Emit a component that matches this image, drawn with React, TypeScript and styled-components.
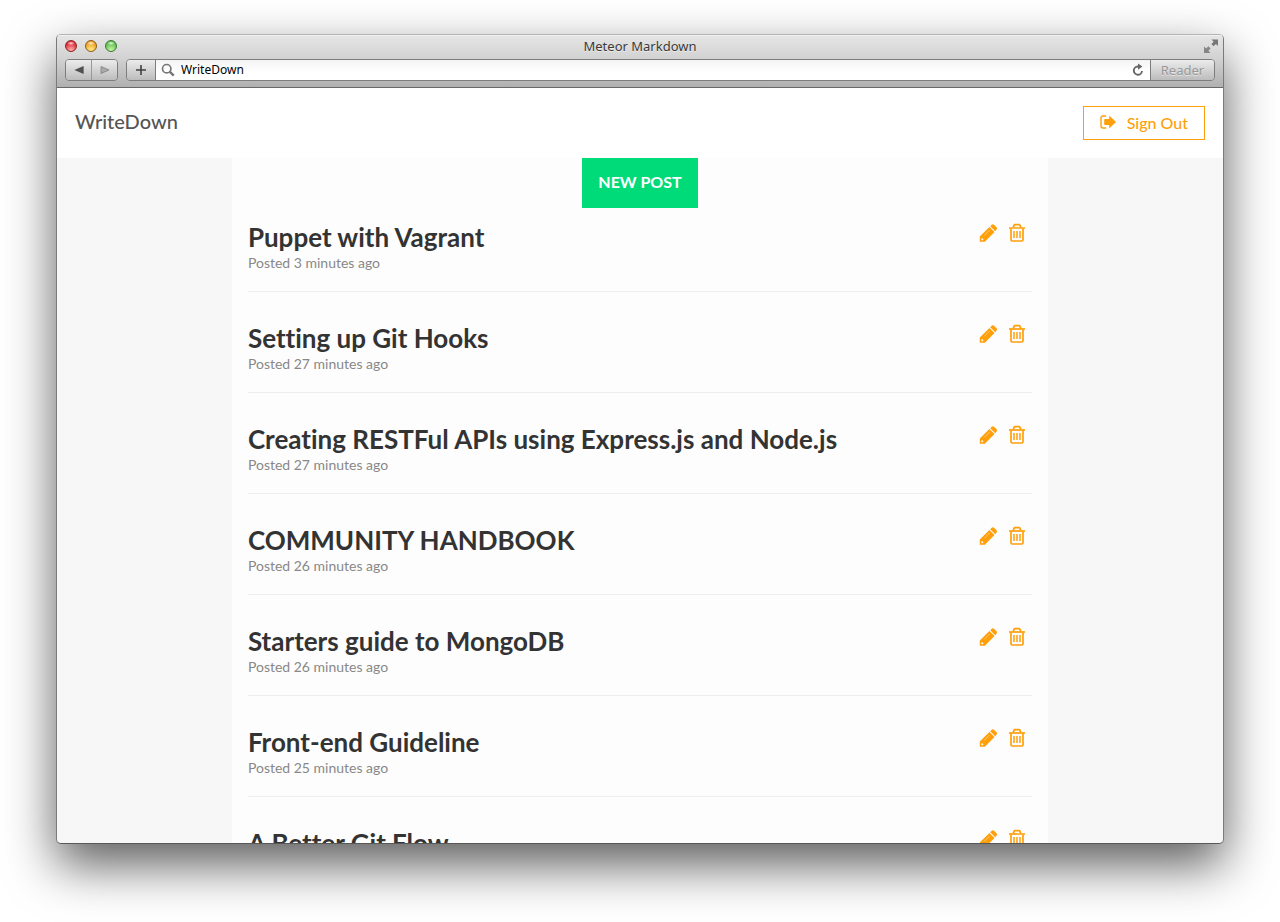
import React from "react";
import styled, { createGlobalStyle } from "styled-components";

const GlobalStyle = createGlobalStyle`
  *, *::before, *::after { box-sizing: border-box; }
  body {
    margin: 0;
    background: #fff;
    font-family: Lato, "Liberation Sans", sans-serif;
    font-variant-ligatures: none;
    color: #333;
  }
  button, input { font: inherit; }
`;

const ORANGE = "#ff9f0a";

const Desktop = styled.div`
  display: flex;
  height: 100vh;
  padding: 34px 56px 78px;
`;

const BrowserWindow = styled.div`
  flex: 1;
  min-width: 0;
  display: flex;
  flex-direction: column;
  overflow: hidden;
  border: 1px solid #7a7a7a;
  border-top-color: #b4b4b4;
  border-bottom-color: #585858;
  border-radius: 5px;
  background: #f7f7f7;
  box-shadow: 0 21px 50px rgba(0, 0, 0, 0.64);
`;

const Chrome = styled.div`
  flex: none;
  padding: 0 8px 6px;
  border-bottom: 1px solid #686868;
  background: linear-gradient(#e6e6e6, #d2d2d2 45%, #b0b0b0);
  font-family: "Noto Sans", "Open Sans", sans-serif;
  box-shadow: inset 0 1px 0 #f1f1f1;
`;

const TitleBar = styled.div`
  display: grid;
  grid-template-columns: 1fr auto 1fr;
  align-items: center;
  height: 24px;
  padding-bottom: 2px;
`;

const Lights = styled.div`
  display: flex;
  gap: 8px;
`;

const Light = styled.button<{ $rim: string; $core: string; $glow: string }>`
  width: 12px;
  height: 12px;
  padding: 0;
  border: 1px solid ${(p) => p.$rim};
  border-radius: 50%;
  background:
    radial-gradient(ellipse 4px 2px at 50% 22%, rgba(255, 255, 255, 0.85), transparent),
    radial-gradient(circle at 50% 90%, ${(p) => p.$glow}, ${(p) => p.$core} 75%);
`;

const WindowTitle = styled.div`
  font-size: 13px;
  line-height: 20px;
  color: #3a3a3a;
  text-shadow: 0 1px 0 rgba(255, 255, 255, 0.5);
`;

const ExpandButton = styled.button`
  justify-self: end;
  display: flex;
  width: 16px;
  height: 16px;
  margin-right: -4px;
  padding: 0;
  border: 0;
  background: none;
  color: #777;
`;

const ToolRow = styled.div`
  display: flex;
  gap: 8px;
`;

const ControlGroup = styled.div<{ $grow?: boolean }>`
  display: flex;
  flex: ${(p) => (p.$grow ? "1" : "none")};
  min-width: 0;
  height: 22px;
  overflow: hidden;
  border: 1px solid #7d7d7d;
  border-radius: 4px;
`;

const ToolButton = styled.button<{ $width: number; $divider?: string; $edge?: "left" | "right" }>`
  flex: none;
  display: flex;
  align-items: center;
  justify-content: center;
  width: ${(p) => p.$width}px;
  padding: 0;
  border: 0 solid ${(p) => p.$divider ?? "transparent"};
  border-left-width: ${(p) => (p.$edge === "left" ? 1 : 0)}px;
  border-right-width: ${(p) => (p.$edge === "right" ? 1 : 0)}px;
  background: linear-gradient(#ececec, #bcbcbc);
  color: #404040;
  font-size: 13px;
  line-height: 20px;

  &:disabled {
    color: #999;
    text-shadow: 0 1px 0 rgba(255, 255, 255, 0.5);
  }
`;

const AddressField = styled.label`
  flex: 1;
  min-width: 0;
  display: flex;
  align-items: center;
  gap: 6px;
  padding-left: 5px;
  background: linear-gradient(#f4f4f4, #fff 60%);
  color: #777;
`;

const AddressInput = styled.input`
  flex: 1;
  min-width: 0;
  padding: 0;
  border: 0;
  outline: 0;
  background: none;
  color: #000;
  font-size: 12px;
  line-height: 18px;
`;

const ReloadButton = styled.button`
  flex: none;
  display: flex;
  align-items: center;
  justify-content: center;
  width: 24px;
  padding: 0;
  border: 0;
  background: linear-gradient(#f4f4f4, #fff 60%);
  color: #666;
`;

const Viewport = styled.div`
  flex: 1;
  min-height: 0;
  overflow: hidden;
`;

const Header = styled.header`
  display: flex;
  justify-content: space-between;
  align-items: center;
  height: 70px;
  padding: 0 18px;
  background: #fff;
`;

const Brand = styled.a`
  padding-bottom: 4px;
  color: #555;
  font-size: 20px;
  font-weight: 500;
  line-height: 28px;
  text-decoration: none;
`;

const SignOutButton = styled.button`
  display: flex;
  align-items: center;
  gap: 11px;
  height: 34px;
  padding: 0 16px 2px;
  border: 1px solid ${ORANGE};
  background: #fff;
  color: ${ORANGE};
  font-size: 16px;
  font-weight: 500;
`;

const Content = styled.main`
  display: flex;
  flex-direction: column;
  width: 70%;
  margin: 0 auto;
  padding: 0 16px;
  background: #fdfdfd;
`;

const NewPostButton = styled.button`
  align-self: center;
  height: 50px;
  padding: 0 16px 4px;
  border: 0;
  background: #00db7a;
  color: #fff;
  font-size: 16px;
  font-weight: 700;
`;

const PostList = styled.ul`
  margin: 0;
  padding: 0;
  list-style: none;
`;

const PostItem = styled.li`
  display: flex;
  justify-content: space-between;
  align-items: flex-start;
  height: 101px;
  padding: 30px 6px 0 0;
  border-bottom: 1px solid #eee;

  &:first-child {
    height: 84px;
    padding-top: 13px;
  }
`;

const PostTitle = styled.h2`
  margin: 0;
  color: #333;
  font-size: 26px;
  font-weight: 700;
  line-height: 32px;
`;

const PostMeta = styled.p`
  margin: 0;
  color: #888;
  font-size: 14px;
  line-height: 20px;
`;

const Actions = styled.div`
  display: flex;
  gap: 10px;
  padding-top: 2px;
`;

const IconButton = styled.button`
  display: flex;
  padding: 0;
  border: 0;
  background: none;
  color: ${ORANGE};
`;

const PencilIcon = () => (
  <svg width="20" height="20" viewBox="0 0 20 20" fill="currentColor" aria-hidden="true">
    <path
      fillRule="evenodd"
      d="M1.8 18.8v-5.2L11.4 4l5.1 5.1L6.9 18.8ZM3.3 15.8v1.4h1.4l.8-.8-1.4-1.4Z"
    />
    <path d="M12.2 3.2 13.7 1.7q1.1-1 2.3 0l2.6 2.6q1 1.1 0 2.3l-1.4 1.7Z" />
    <path d="m6.2 12.4 5.4-5.4" stroke="#fdfdfd" strokeWidth=".6" opacity=".7" />
  </svg>
);

const TrashIcon = () => (
  <svg width="18" height="20" viewBox="0 0 18 20" fill="none" stroke="currentColor" strokeWidth="1.7" aria-hidden="true">
    <path d="M1 5h16" />
    <path d="M5.2 4.6 6 2.4q.3-.7 1-.7h4q.7 0 1 .7l.8 2.2" />
    <path d="M3 5.2v11.6q0 1.2 1.2 1.2h9.6q1.2 0 1.2-1.2V5.2" />
    <path d="M6 8v7M9 8v7M12 8v7" strokeWidth="1.5" />
  </svg>
);

const SignOutIcon = () => (
  <svg width="16" height="14" viewBox="0 0 16 14" aria-hidden="true">
    <path d="M6.2 1H3Q1 1 1 3v8q0 2 2 2h3.2" fill="none" stroke="currentColor" strokeWidth="1.4" />
    <path
      d="M4.8 4.1h4.4V1.6q0-1 .7-.4l5.6 5.3q.5.5 0 1l-5.6 5.3q-.7.6-.7-.4V9.9H4.8q-.6 0-.6-.6V4.7q0-.6.6-.6Z"
      fill="currentColor"
    />
  </svg>
);

const SearchIcon = () => (
  <svg width="14" height="14" viewBox="0 0 14 14" fill="none" stroke="currentColor" aria-hidden="true">
    <circle cx="5.7" cy="5.7" r="4.2" strokeWidth="1.7" />
    <path d="m8.6 8.6 4.2 4" strokeWidth="2.4" />
  </svg>
);

const ReloadIcon = () => (
  <svg width="12" height="14" viewBox="0 0 12 14" aria-hidden="true">
    <path d="M6.8 3.5H5.7A4.1 4.1 0 1 0 10 8" fill="none" stroke="currentColor" strokeWidth="1.9" />
    <path d="M6 .5 10.4 3.6 6 6.8Z" fill="currentColor" />
  </svg>
);

const ExpandIcon = () => (
  <svg width="16" height="16" viewBox="0 0 16 16" fill="currentColor" aria-hidden="true">
    <path d="M8.5 1.5H15V8l-2.1-2.1-2.3 2.3-2.2-2.2 2.3-2.3Z" />
    <path d="M7.5 15H1V8.5l2.1 2.1 2.3-2.3 2.2 2.2-2.3 2.3Z" opacity=".85" />
  </svg>
);

const Triangle = ({ back }: { back?: boolean }) => (
  <svg width="10" height="8" viewBox="0 0 10 8" aria-hidden="true">
    {back ? (
      <path d="M9.6 0v8L.4 4Z" fill="#505050" />
    ) : (
      <path d="M1 .5v7L9 4Z" fill="#aaa" stroke="#808080" strokeWidth=".8" />
    )}
  </svg>
);

const PlusIcon = () => (
  <svg width="12" height="12" viewBox="0 0 12 12" stroke="currentColor" strokeWidth="1.6" aria-hidden="true">
    <path d="M6 1v10M1 6h10" />
  </svg>
);

const posts = [
  { title: "Puppet with Vagrant", minutes: 3 },
  { title: "Setting up Git Hooks", minutes: 27 },
  { title: "Creating RESTFul APIs using Express.js and Node.js", minutes: 27 },
  { title: "COMMUNITY HANDBOOK", minutes: 26 },
  { title: "Starters guide to MongoDB", minutes: 26 },
  { title: "Front-end Guideline", minutes: 25 },
  { title: "A Better Git Flow", minutes: 25 },
];

export default function App() {
  return (
    <>
      <GlobalStyle />
      <Desktop>
        <BrowserWindow>
          <Chrome>
            <TitleBar>
              <Lights>
                <Light aria-label="Close" $rim="#8d2424" $core="#dc1f2b" $glow="#ffb0b0" />
                <Light aria-label="Minimize" $rim="#8f5a12" $core="#eb9a1e" $glow="#fff08a" />
                <Light aria-label="Zoom" $rim="#3b7a2e" $core="#58b84a" $glow="#c8f7a8" />
              </Lights>
              <WindowTitle>Meteor Markdown</WindowTitle>
              <ExpandButton aria-label="Full screen">
                <ExpandIcon />
              </ExpandButton>
            </TitleBar>
            <ToolRow>
              <ControlGroup>
                <ToolButton aria-label="Back" $width={26} $edge="right" $divider="#999">
                  <Triangle back />
                </ToolButton>
                <ToolButton aria-label="Forward" $width={25}>
                  <Triangle />
                </ToolButton>
              </ControlGroup>
              <ControlGroup $grow>
                <ToolButton aria-label="Add bookmark" $width={29} $edge="right" $divider="#7d7d7d">
                  <PlusIcon />
                </ToolButton>
                <AddressField>
                  <SearchIcon />
                  <AddressInput aria-label="Address" defaultValue="WriteDown" />
                </AddressField>
                <ReloadButton aria-label="Reload">
                  <ReloadIcon />
                </ReloadButton>
                <ToolButton disabled $width={64} $edge="left" $divider="#7d7d7d">
                  Reader
                </ToolButton>
              </ControlGroup>
            </ToolRow>
          </Chrome>
          <Viewport>
            <Header>
              <Brand href="#">WriteDown</Brand>
              <SignOutButton>
                <SignOutIcon />
                Sign Out
              </SignOutButton>
            </Header>
            <Content>
              <NewPostButton>NEW POST</NewPostButton>
              <PostList>
                {posts.map((post) => (
                  <PostItem key={post.title}>
                    <div>
                      <PostTitle>{post.title}</PostTitle>
                      <PostMeta>Posted {post.minutes} minutes ago</PostMeta>
                    </div>
                    <Actions>
                      <IconButton aria-label={`Edit ${post.title}`}>
                        <PencilIcon />
                      </IconButton>
                      <IconButton aria-label={`Delete ${post.title}`}>
                        <TrashIcon />
                      </IconButton>
                    </Actions>
                  </PostItem>
                ))}
              </PostList>
            </Content>
          </Viewport>
        </BrowserWindow>
      </Desktop>
    </>
  );
}
